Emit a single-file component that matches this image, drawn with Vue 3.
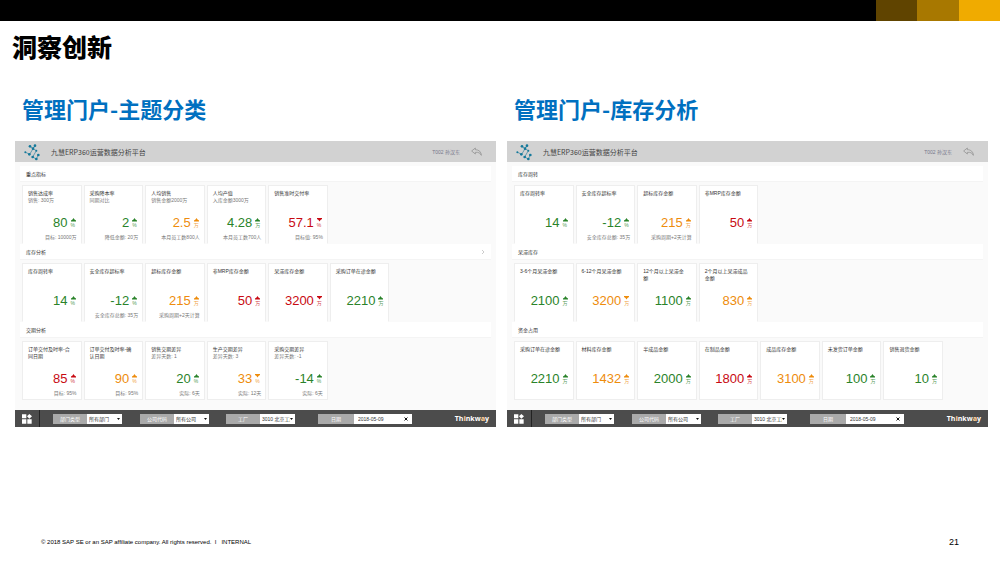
<script setup>
const card = (title, value, unit, tone, extra = {}) => ({ title, value, unit, tone, ...extra })

const portals = [
  {
    id: 'topic',
    heading: '管理门户-主题分类',
    sections: [
      {
        title: '重点指标',
        cards: [
          card('销售达成率', '80', '%', 'green', { sub: '销售: 300万', note: '目标: 10000万' }),
          card('采购降本率', '2', '%', 'green', { sub: '同期对比', note: '降低金额: 20万' }),
          card('人均销售', '2.5', '万', 'orange', { sub: '销售金额2000万', note: '本月员工数800人' }),
          card('人均产值', '4.28', '万', 'green', { sub: '入库金额3000万', note: '本月员工数700人' }),
          card('销售准时交付率', '57.1', '%', 'red', { down: true, note: '目标值: 95%' }),
        ],
      },
      {
        title: '库存分析',
        more: true,
        cards: [
          card('库存周转率', '14', '%', 'green'),
          card('安全库存超标率', '-12', '%', 'green', { note: '安全库存总额: 35万' }),
          card('超标库存金额', '215', '万', 'orange', { note: '采购周期+2天计算' }),
          card('非MRP库存金额', '50', '万', 'red'),
          card('呆滞库存金额', '3200', '万', 'red', { down: true }),
          card('采购订单在途金额', '2210', '万', 'green'),
        ],
      },
      {
        title: '交期分析',
        cards: [
          card('订单交付及时率-合\n同日期', '85', '%', 'red', { note: '目标: 95%' }),
          card('订单交付及时率-确\n认日期', '90', '%', 'orange', { note: '目标: 95%' }),
          card('销售交期差异', '20', '%', 'green', { sub: '差异天数: 1', note: '实际: 6天' }),
          card('生产交期差异', '33', '%', 'orange', { down: true, sub: '差异天数: 3', note: '实际: 12天' }),
          card('采购交期差异', '-14', '%', 'green', { sub: '差异天数: -1', note: '实际: 6天' }),
        ],
      },
    ],
  },
  {
    id: 'stock',
    heading: '管理门户-库存分析',
    sections: [
      {
        title: '库存周转',
        cards: [
          card('库存周转率', '14', '%', 'green'),
          card('安全库存超标率', '-12', '%', 'green', { note: '安全库存总额: 35万' }),
          card('超标库存金额', '215', '万', 'orange', { note: '采购周期+2天计算' }),
          card('非MRP库存金额', '50', '万', 'red'),
        ],
      },
      {
        title: '呆滞库存',
        cards: [
          card('3-6个月呆滞金额', '2100', '万', 'green'),
          card('6-12个月呆滞金额', '3200', '万', 'orange', { down: true }),
          card('12个月以上呆滞金\n额', '1100', '万', 'green'),
          card('2个月以上呆滞成品\n金额', '830', '万', 'orange'),
        ],
      },
      {
        title: '资金占用',
        cards: [
          card('采购订单在途金额', '2210', '万', 'green'),
          card('材料库存金额', '1432', '万', 'orange'),
          card('半成品金额', '2000', '万', 'green'),
          card('在制品金额', '1800', '万', 'red'),
          card('成品库存金额', '3100', '万', 'orange'),
          card('未发货订单金额', '100', '万', 'green'),
          card('销售退货金额', '10', '万', 'green'),
        ],
      },
    ],
  },
]

const filters = [
  { key: 'dept', label: '部门类型', value: '所有部门' },
  { key: 'company', label: '公司代码', value: '所有公司' },
  { key: 'plant', label: '工厂', value: '3010 北京工厂' },
]
</script>

<template>
  <div class="slide">
    <div class="band"><i class="b1"></i><i class="b2"></i><i class="b3"></i></div>
    <h1>洞察创新</h1>
    <main>
      <section v-for="p in portals" :key="p.id" class="column">
        <h2>{{ p.heading }}</h2>
        <div class="portal">
          <header class="top">
            <svg class="logo" viewBox="0 0 48 48" aria-hidden="true">
              <path d="M5 25 17 31 32 6M18 7 27 14 33 5M27 14 37 20 26 39 37 45 43 33" />
              <g>
                <circle cx="4" cy="25" r="3" /><circle cx="16" cy="31" r="4" /><circle cx="18" cy="7" r="4" />
                <circle cx="33" cy="5" r="4" /><circle cx="27" cy="14" r="4" /><circle cx="37" cy="20" r="3" />
                <circle cx="26" cy="39" r="4" /><circle cx="37" cy="45" r="4" /><circle cx="43" cy="33" r="4" />
              </g>
            </svg>
            <span class="name">九慧ERP360运营数据分析平台</span>
            <span class="user">T002 孙汉东</span>
            <button class="back" type="button" aria-label="返回">
              <svg viewBox="0 0 33 27" aria-hidden="true">
                <path d="M13 3 2 12 13 21V16C22 15 28 18 31 25 31 15 24 8 13 8Z" />
              </svg>
            </button>
          </header>
          <div class="body">
            <section v-for="s in p.sections" :key="s.title" class="group">
              <h3>
                {{ s.title }}
                <svg v-if="s.more" viewBox="0 0 4 6" aria-hidden="true"><path d="M1 1 3 3 1 5" /></svg>
              </h3>
              <div class="cards">
                <article v-for="c in s.cards" :key="c.title" class="card">
                  <div class="head">
                    <h4>{{ c.title }}</h4>
                    <p v-if="c.sub">{{ c.sub }}</p>
                  </div>
                  <div class="metric" :class="c.tone">
                    <strong>{{ c.value }}</strong>
                    <span class="unit">
                      <svg viewBox="0 0 10 8" aria-hidden="true">
                        <path :d="c.down ? 'M0 0H10V2L7 4 5 7 3 4 0 2Z' : 'M5 0 7 3 10 5V7H0V5L3 3Z'" />
                      </svg>
                      <span>{{ c.unit }}</span>
                    </span>
                  </div>
                  <p class="note">{{ c.note }}</p>
                </article>
              </div>
            </section>
          </div>
          <footer class="bar">
            <button class="apps" type="button" aria-label="菜单">
              <svg viewBox="0 0 30 30" aria-hidden="true">
                <path d="M0 1H13V13H0ZM0 16H13V29H0ZM16 16H29V29H16ZM22 0 30 7 22 14 15 7Z" />
              </svg>
            </button>
            <div v-for="f in filters" :key="f.key" class="field" :class="f.key">
              <label :for="p.id + f.key">{{ f.label }}</label>
              <span class="pick">
                <select :id="p.id + f.key"><option>{{ f.value }}</option></select>
                <svg viewBox="0 0 6 4" aria-hidden="true"><path d="M0 0H6L3 4Z" /></svg>
              </span>
            </div>
            <div class="field date">
              <label :for="p.id + 'date'">日期</label>
              <input :id="p.id + 'date'" type="text" value="2018-05-09" />
              <button class="clear" type="button" aria-label="清除">
                <svg viewBox="0 0 8 8" aria-hidden="true"><path d="M1 1 7 7M7 1 1 7" /></svg>
              </button>
            </div>
            <span class="brand">Th<b>i</b>nkw<b>a</b>y</span>
          </footer>
        </div>
      </section>
    </main>
    <footer class="legal">
      <span>© 2018 SAP SE or an SAP affiliate company. All rights reserved. &nbsp;I &nbsp; INTERNAL</span>
      <span class="page">21</span>
    </footer>
  </div>
</template>

<style>
body { margin: 0; background: #fff; }
</style>

<style scoped>
* { box-sizing: border-box; }
h1, h2, h3, h4, p { margin: 0; }
button { padding: 0; border: 0; background: none; }
svg { display: block; }
.slide {
  min-height: 100vh;
  display: flex;
  flex-direction: column;
  background: #fff;
  font-family: "Liberation Sans", "Noto Sans CJK SC", sans-serif;
}
.band { height: 21px; display: flex; justify-content: flex-end; background: #000; }
.band i { width: 4.15%; }
.b1 { background: #604400; }
.b2 { background: #a87800; }
.b3 { background: #f0ab00; }
h1 { padding: 7px 12px 0; font: 900 25px/36px "Noto Sans CJK SC", sans-serif; color: #000; }
main { display: grid; grid-template-columns: 1fr 1fr; gap: 11px; padding: 28px 12px 0 15px; }
.column { min-width: 0; }
h2 { padding-left: 7px; margin-bottom: 17px; font: bold 22px/32px "Noto Sans CJK SC", sans-serif; color: #0070c0; }
.portal { background: #fafafa; }
.top { height: 21px; display: flex; align-items: center; padding: 0 14px 0 9px; background: #d2d2d2; }
.logo { width: 16px; height: 16px; overflow: visible; }
.logo path { fill: none; stroke: #2b7f9c; stroke-width: 2; }
.logo g { fill: #14799b; }
.name { margin-left: 11px; font: 7px/10px "Noto Sans CJK SC", sans-serif; color: #444; }
.user { margin-left: auto; font-size: 5px; line-height: 8px; color: #77778a; }
.back { margin-left: 11px; }
.back svg { width: 11px; height: 9px; }
.back path { fill: none; stroke: #888; stroke-width: 2; }
.body { padding: 4px 5px 10px; }
h3 {
  height: 16px;
  display: flex;
  align-items: center;
  justify-content: space-between;
  padding: 0 6px;
  background: #fff;
  border-bottom: 1px solid #f4f4f4;
  font-size: 5px;
  font-weight: 400;
  color: #333;
}
h3 svg { width: 4px; height: 6px; }
h3 path { fill: none; stroke: #ccc; stroke-width: 1; }
.cards { display: grid; grid-template-columns: repeat(7, minmax(0, 1fr)); gap: 2px; padding: 3px 40px 0 2px; }
.card {
  height: 59px;
  display: flex;
  flex-direction: column;
  padding: 4px 4px 2px 5px;
  background: #fff;
  border: 1px solid #eee;
}
.group:not(:last-child) .card { border-bottom-color: #fff; }
.head { height: 24px; }
h4 { font-size: 5px; line-height: 7px; font-weight: 400; color: #333; white-space: pre; }
.card p { font-size: 5px; line-height: 7px; color: #777; white-space: nowrap; }
.metric { height: 18px; display: flex; align-items: center; justify-content: flex-end; gap: 3px; padding-right: 1px; }
.metric strong { font-size: 13px; line-height: 18px; font-weight: 400; }
.unit { width: 5px; font-size: 5px; line-height: 7px; white-space: nowrap; }
.unit svg { width: 5px; height: 4px; fill: currentColor; }
.unit span { opacity: 0.8; }
.green { color: #2a832a; }
.orange { color: #ee8c0c; }
.red { color: #c80a12; }
.card .note { margin-top: auto; display: flex; justify-content: flex-end; }
.bar { height: 17px; display: flex; align-items: center; padding-right: 7px; background: #4c4c4c; }
.apps { width: 25px; height: 17px; padding-left: 7px; border-right: 1px solid #222; }
.apps svg { width: 10px; height: 10px; fill: #fff; }
.field { height: 10px; width: 69px; display: flex; background: #fff; }
.dept { margin-left: 13px; }
.company { margin-left: 18px; }
.plant { margin-left: 17px; }
.date { width: 94px; margin-left: 23px; }
.field label { flex: none; width: 34px; background: #aaa; color: #fff; font-size: 5px; line-height: 10px; text-align: center; }
.date label { width: 36px; }
.pick { flex: 1; min-width: 0; display: flex; align-items: center; padding-right: 2px; }
.pick svg { flex: none; width: 3px; height: 2px; fill: #111; }
select, input {
  flex: 1;
  min-width: 0;
  width: 0;
  height: 10px;
  margin: 0;
  padding: 0 0 0 2px;
  border: 0;
  border-radius: 0;
  appearance: none;
  background: transparent;
  color: #333;
  font-family: inherit;
  font-size: 5px;
  line-height: 10px;
}
input { padding-left: 4px; }
.clear { margin-right: 4px; }
.clear svg { width: 4px; height: 4px; }
.clear path { stroke: #111; stroke-width: 2; }
.brand { margin-left: auto; font: bold 7px/10px "Open Sans", sans-serif; color: #fff; }
.brand b { color: #f5c58c; }
.legal { margin-top: auto; display: flex; align-items: center; justify-content: space-between; padding: 0 41px 14px; font-size: 6px; line-height: 12px; color: #000; }
.page { font-size: 9px; }
</style>
